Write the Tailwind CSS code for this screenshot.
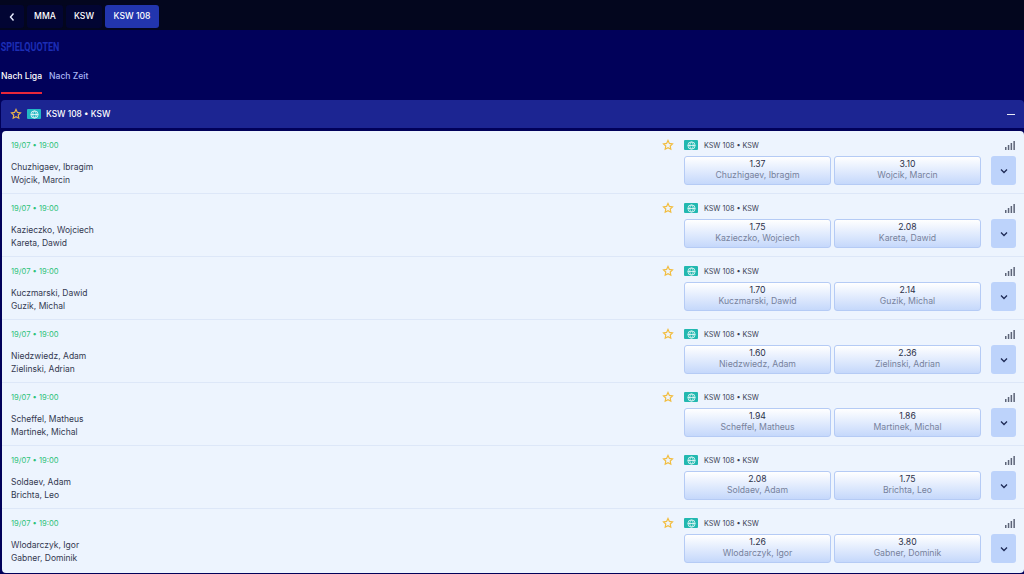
<!DOCTYPE html>
<html lang="en">
<head>
  <meta charset="UTF-8" />
  <title>KSW 108</title>
  <script src="https://cdn.jsdelivr.net/npm/@tailwindcss/browser@4"></script>
</head>
<body class="bg-[#01015a] text-[#2b3048] font-['Inter',sans-serif] w-[1024px] h-[574px] overflow-hidden">

  <!-- Breadcrumb -->
  <nav class="h-[30px] bg-[#03061e] flex items-center gap-[3px] pt-[3px] text-[8.6px] font-medium text-white">
    <button class="w-[24px] h-[23px] rounded-r-[3px] bg-[#020533] flex items-center justify-center">
      <svg width="8" height="10" viewBox="0 0 8 10" fill="none" stroke="#e8ecff" stroke-width="1.4"><path d="M5.500 1.500 2.500 5l3 3.500"/></svg>
    </button>
    <span class="w-[36px] h-[23px] rounded-[3px] bg-[#020533] flex items-center justify-center">MMA</span>
    <span class="w-[36px] h-[23px] rounded-[3px] bg-[#020533] flex items-center justify-center">KSW</span>
    <span class="w-[54px] h-[23px] rounded-[3px] bg-[#2235ae] flex items-center justify-center">KSW 108</span>
  </nav>

  <h1 class="h-[17px] mt-[9px] pl-[1px] font-['Roboto',sans-serif] text-[12px] leading-[17px] font-bold text-[#1c2db4] origin-left scale-x-[.75]">SPIELQUOTEN</h1>

  <!-- Tabs -->
  <div class="flex gap-[7px] mt-[12px] h-[26px] pl-[1px] text-[8.6px] font-medium whitespace-nowrap">
    <a class="w-[41px] border-b-2 border-[#e8283a] text-white pt-[2px]">Nach Liga</a>
    <a class="text-[#a9b5f5] pt-[2px]">Nach Zeit</a>
  </div>

  <!-- League header -->
  <div class="ml-[1px] mt-[6px] h-[28px] rounded-t-[4px] bg-[#1c2592] flex items-center pl-[9px] pr-[9px] text-white text-[8.4px] font-medium">
    <svg width="12" height="12" viewBox="0 0 24 24" fill="none" stroke="#e9b44c" stroke-width="2.400"><path d="m12 3 2.800 5.800 6.200.9-4.500 4.400 1.100 6.300-5.600-3-5.600 3 1.100-6.300L3 9.700l6.200-.9z"/></svg>
    <span class="ml-[5px] w-[14px] h-[10px] rounded-[1px] bg-[#22b8c4] flex items-center justify-center">
      <svg width="9" height="9" viewBox="0 0 16 16" fill="none" stroke="#fff" stroke-width="1.300"><circle cx="8" cy="8" r="6.500"/><path d="M1.500 8h13M8 1.500c-4 4-4 9 0 13 4-4 4-9 0-13"/></svg>
    </span>
    <span class="ml-[5px]">KSW 108 • KSW</span>
    <span class="ml-auto w-[8px] h-[1px] bg-white/90"></span>
  </div>

  <!-- Matches -->
  <div id="matches" class="ml-[2px] mt-[3px] h-[442px] rounded-[4px] bg-[#edf4fe] overflow-hidden"></div>

  <script>
    const matches = [
      ['Chuzhigaev, Ibragim', 'Wojcik, Marcin', '1.37', '3.10'],
      ['Kazieczko, Wojciech', 'Kareta, Dawid', '1.75', '2.08'],
      ['Kuczmarski, Dawid', 'Guzik, Michal', '1.70', '2.14'],
      ['Niedzwiedz, Adam', 'Zielinski, Adrian', '1.60', '2.36'],
      ['Scheffel, Matheus', 'Martinek, Michal', '1.94', '1.86'],
      ['Soldaev, Adam', 'Brichta, Leo', '2.08', '1.75'],
      ['Wlodarczyk, Igor', 'Gabner, Dominik', '1.26', '3.80']
    ];

    const oddButton = (odd, name) => `
      <button class="w-[147px] h-[29px] pb-[1px] rounded-[3px] border border-[#b5cbf5] bg-gradient-to-b from-white to-[#c5d8fb] flex flex-col items-center justify-center">
        <span class="text-[8.7px] leading-[11px] text-[#2b3048]">${odd}</span>
        <span class="text-[8.7px] leading-[11px] text-[#77829c]">${name}</span>
      </button>`;

    document.getElementById('matches').innerHTML = matches.map(([a, b, oddA, oddB]) => `
      <div class="h-[63px] border-b border-[#dde7f8] flex last:border-b-0">
        <div class="flex-1 pl-[9px] pt-[9px]">
          <div class="text-[7.6px] leading-[11px] text-[#2fc27a]">19/07 • 19:00</div>
          <div class="mt-[10px] text-[8.5px] leading-[13px] text-[#333850]">${a}<br>${b}</div>
        </div>
        <svg class="mt-[8px] mr-[10px]" width="12" height="12" viewBox="0 0 24 24" fill="none" stroke="#f2bd3f" stroke-width="2.400"><path d="m12 3 2.800 5.800 6.200.9-4.500 4.400 1.100 6.300-5.600-3-5.600 3 1.100-6.300L3 9.700l6.200-.9z"/></svg>
        <div class="w-[340px] pt-[9px]">
          <div class="h-[10px] flex items-center text-[7.200px] text-[#3a3f55]">
            <span class="w-[14px] h-[10px] rounded-[1px] bg-[#22b8b0] flex items-center justify-center">
              <svg width="9" height="9" viewBox="0 0 16 16" fill="none" stroke="#fff" stroke-width="1.300"><circle cx="8" cy="8" r="6.500"/><path d="M1.500 8h13M8 1.500c-4 4-4 9 0 13 4-4 4-9 0-13"/></svg>
            </span>
            <span class="ml-[6px] pt-[2px]">KSW 108 • KSW</span>
            <svg class="ml-auto mr-[9px]" width="10" height="9" viewBox="0 0 10 9" fill="#5d6478"><rect x="0" y="6" width="1.500" height="3"/><rect x="2.800" y="4" width="1.500" height="5"/><rect x="5.600" y="2" width="1.500" height="7"/><rect x="8.400" y="0" width="1.500" height="9"/></svg>
          </div>
          <div class="flex mt-[6px] gap-[3px]">
            ${oddButton(oddA, a)}
            ${oddButton(oddB, b)}
            <button class="ml-[7px] w-[25px] h-[29px] rounded-[3px] bg-[#bdd3fb] flex items-center justify-center">
              <svg width="8" height="6" viewBox="0 0 8 6" fill="none" stroke="#1e2a55" stroke-width="1.300"><path d="m1 1.500 3 3 3-3"/></svg>
            </button>
          </div>
        </div>
      </div>`).join('');
  </script>
</body>
</html>
